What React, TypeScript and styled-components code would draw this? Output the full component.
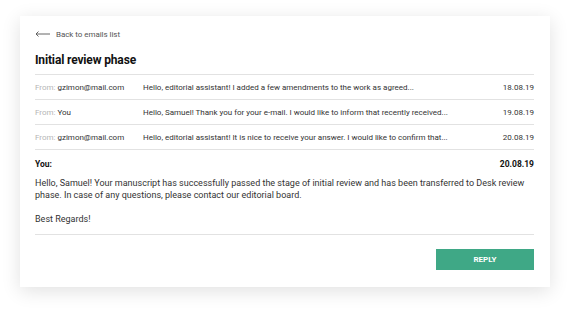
import React from "react";
import styled, { createGlobalStyle } from "styled-components";

const Global = createGlobalStyle`
  html, body { margin: 0; padding: 0; background: #ffffff; }
  body { font-family: Roboto, "Liberation Sans", sans-serif; color: #222; }
`;

const Page = styled.div`
  width: 571px;
  height: 312px;
  padding: 16px 21px 25px 20px;
  box-sizing: border-box;
`;

const Card = styled.div`
  background: #fff;
  height: 271px;
  box-sizing: border-box;
  padding: 0 16px 0 15px;
  box-shadow: 0 4px 18px rgba(0, 0, 0, 0.12);
  display: flex;
  flex-direction: column;
`;

const Back = styled.div`
  display: flex;
  align-items: center;
  gap: 6px;
  height: 12px;
  margin-top: 12px;
  font-size: 8px;
  color: #555;
  letter-spacing: -0.05px;
`;

const Title = styled.h1`
  margin: 12px 0 0;
  height: 16px;
  font-size: 12px;
  line-height: 16px;
  font-weight: 700;
  color: #111;
  letter-spacing: -0.15px;
`;

const List = styled.div`
  margin-top: 6px;
  border-top: 1px solid #e2e2e2;
`;

const Row = styled.div`
  display: grid;
  grid-template-columns: 108px 1fr auto;
  align-items: center;
  height: 24px;
  border-bottom: 1px solid #e2e2e2;
  font-size: 8px;
  color: #333;
`;

const From = styled.span`
  color: #b5b5b5;
`;

const Date = styled.span`
  text-align: right;
`;

const Head = styled.div`
  display: flex;
  justify-content: space-between;
  margin-top: 9px;
  font-size: 8.5px;
  font-weight: 700;
  color: #111;
`;

const Body = styled.div`
  margin-top: 8px;
  font-size: 9px;
  line-height: 12px;
  color: #333;
  padding-bottom: 9px;
  border-bottom: 1px solid #e2e2e2;
  p { margin: 0 0 12px; }
  p:last-child { margin-bottom: 0; }
`;

const Actions = styled.div`
  display: flex;
  justify-content: flex-end;
  margin-top: 14px;
`;

const Reply = styled.button`
  width: 98px;
  height: 21px;
  border: none;
  background: #3fa886;
  color: #fff;
  font-family: inherit;
  font-size: 8px;
  font-weight: 700;
  text-transform: uppercase;
  padding: 0;
`;

const emails = [
  { from: "gzimon@mail.com", text: "Hello, editorial assistant! I added a few amendments to the work as agreed...", date: "18.08.19" },
  { from: "You", text: "Hello, Samuel! Thank you for your e-mail. I would like to inform that recently received...", date: "19.08.19" },
  { from: "gzimon@mail.com", text: "Hello, editorial assistant! It is nice to receive your answer. I would like to confirm that...", date: "20.08.19" },
];

export default function App() {
  return (
    <>
      <Global />
      <Page>
        <Card>
          <Back>
            <svg width="15" height="6" viewBox="0 0 15 6">
              <path d="M15 3H1M3.5 0.5L1 3l2.5 2.5" stroke="#555" strokeWidth="0.9" fill="none" />
            </svg>
            Back to emails list
          </Back>
          <Title>Initial review phase</Title>
          <List>
            {emails.map((e, i) => (
              <Row key={i}>
                <span><From>From:</From> {e.from}</span>
                <span>{e.text}</span>
                <Date>{e.date}</Date>
              </Row>
            ))}
          </List>
          <Head>
            <span>You:</span>
            <span>20.08.19</span>
          </Head>
          <Body>
            <p>Hello, Samuel! Your manuscript has successfully passed the stage of initial review and has been transferred to Desk review phase. In case of any questions, please contact our editorial board.</p>
            <p>Best Regards!</p>
          </Body>
          <Actions>
            <Reply>Reply</Reply>
          </Actions>
        </Card>
      </Page>
    </>
  );
}
